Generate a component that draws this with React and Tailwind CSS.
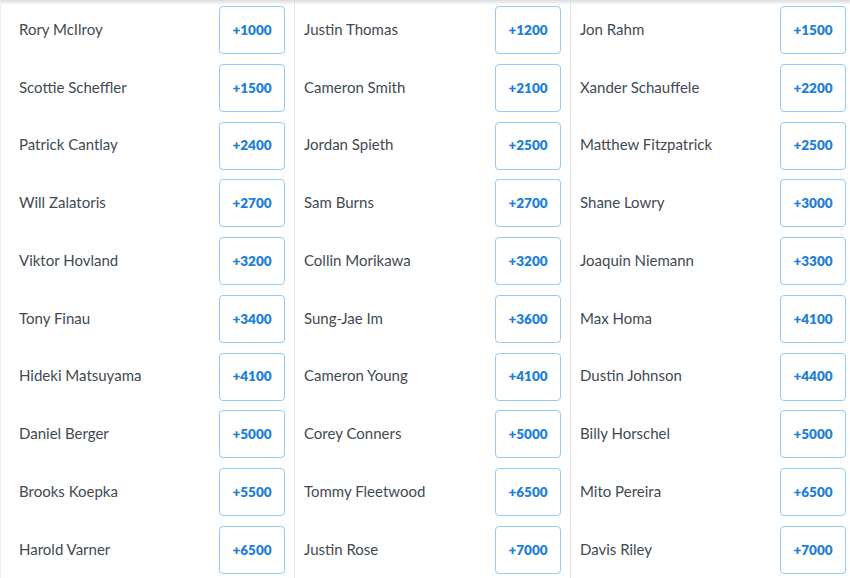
import React from "react";

const cols = [
  [
    ["Rory McIlroy", "+1000"],
    ["Scottie Scheffler", "+1500"],
    ["Patrick Cantlay", "+2400"],
    ["Will Zalatoris", "+2700"],
    ["Viktor Hovland", "+3200"],
    ["Tony Finau", "+3400"],
    ["Hideki Matsuyama", "+4100"],
    ["Daniel Berger", "+5000"],
    ["Brooks Koepka", "+5500"],
    ["Harold Varner", "+6500"],
  ],
  [
    ["Justin Thomas", "+1200"],
    ["Cameron Smith", "+2100"],
    ["Jordan Spieth", "+2500"],
    ["Sam Burns", "+2700"],
    ["Collin Morikawa", "+3200"],
    ["Sung-Jae Im", "+3600"],
    ["Cameron Young", "+4100"],
    ["Corey Conners", "+5000"],
    ["Tommy Fleetwood", "+6500"],
    ["Justin Rose", "+7000"],
  ],
  [
    ["Jon Rahm", "+1500"],
    ["Xander Schauffele", "+2200"],
    ["Matthew Fitzpatrick", "+2500"],
    ["Shane Lowry", "+3000"],
    ["Joaquin Niemann", "+3300"],
    ["Max Homa", "+4100"],
    ["Dustin Johnson", "+4400"],
    ["Billy Horschel", "+5000"],
    ["Mito Pereira", "+6500"],
    ["Davis Riley", "+7000"],
  ],
];

function Column({ rows, className }) {
  return (
    <div className={"flex flex-col gap-[9.75px] pt-[6px] " + className}>
      {rows.map(([name, odds]) => (
        <div key={name} className="flex items-center justify-between h-[48px]">
          <span className="text-[15px] text-[#414a54] mb-[2px]">{name}</span>
          <button className="w-[66px] h-[48px] rounded-[4px] border border-[#93cbf6] bg-white text-[13.5px] font-extrabold text-[#1e7fd8] flex items-center justify-center">
            {odds}
          </button>
        </div>
      ))}
    </div>
  );
}

export default function App() {
  return (
    <div
      className="relative w-[850px] h-[578px] overflow-hidden bg-white flex border-l border-[#eceef1]"
      style={{ fontFamily: "Lato, 'Open Sans', sans-serif" }}
    >
      <Column rows={cols[0]} className="w-[294px] pl-[18px] pr-[9px] border-r-[1.5px] border-[#e0e4e8]" />
      <Column rows={cols[1]} className="w-[276px] pl-[9px] pr-[9px] border-r-[1.5px] border-[#e0e4e8]" />
      <Column rows={cols[2]} className="w-[279px] pl-[9px] pr-[4px]" />
      <div className="absolute left-0 right-0 top-0 h-[5px] bg-gradient-to-b from-[#d9dbde] to-transparent" />
    </div>
  );
}
